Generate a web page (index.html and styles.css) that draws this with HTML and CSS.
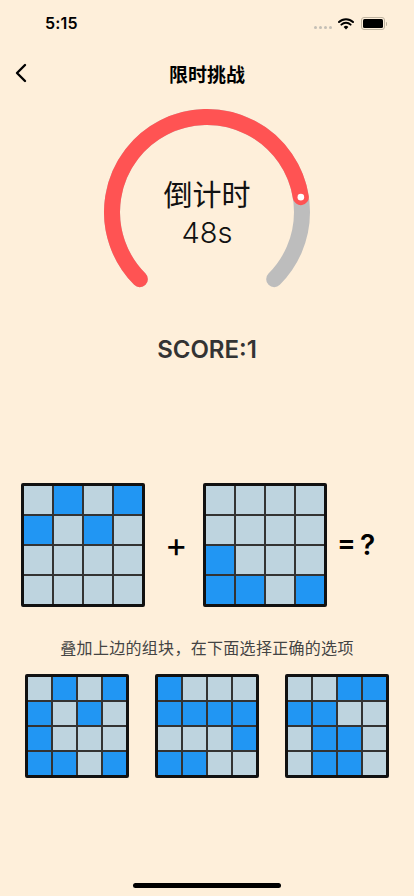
FILE: index.html
```html
<!DOCTYPE html>
<html>
<head>
    <meta charset="utf-8">
    <title>限时挑战</title>
    <link rel="stylesheet" href="styles.css">
</head>
<body>
    <div class="status-bar">
        <span class="time">5:15</span>
        <div class="status-icons">
            <div class="signal"><i></i><i></i><i></i><i></i></div>
            <svg class="wifi" width="16" height="12" viewBox="0 0 16 12">
                <path d="M8 11.5 L5.6 8.9 A3.4 3.4 0 0 1 10.4 8.9 Z" fill="#000"/>
                <path d="M3.4 6.6 A6.6 6.6 0 0 1 12.6 6.6" fill="none" stroke="#000" stroke-width="2" stroke-linecap="round"/>
                <path d="M1 4 A10 10 0 0 1 15 4" fill="none" stroke="#000" stroke-width="2" stroke-linecap="round"/>
            </svg>
            <div class="battery"><div class="battery-fill"></div></div>
            <div class="battery-nub"></div>
        </div>
    </div>

    <div class="nav-bar">
        <svg class="back" width="14" height="20" viewBox="0 0 14 20">
            <path d="M11 2 L3 10 L11 18" fill="none" stroke="#000" stroke-width="2.4" stroke-linecap="round" stroke-linejoin="round"/>
        </svg>
        <h1 class="title">限时挑战</h1>
    </div>

    <div class="gauge">
        <svg width="224" height="200" viewBox="0 0 224 200">
            <!-- remaining track -->
            <path d="M44.82 171.18 A95 95 0 1 1 179.18 171.18" fill="none" stroke="#bdbdbd" stroke-width="16" stroke-linecap="round"/>
            <!-- 48 of 60 seconds -->
            <path d="M44.82 171.18 A95 95 0 1 1 205.83 89.14" fill="none" stroke="#ff5353" stroke-width="16" stroke-linecap="round"/>
            <circle cx="205.83" cy="89.14" r="3.3" fill="#fff"/>
        </svg>
        <div class="gauge-text">
            <div class="gauge-label">倒计时</div>
            <div class="gauge-value">48s</div>
        </div>
    </div>

    <div class="score">SCORE:1</div>

    <div class="question">
        <div class="board big">
            <i></i><i class="on"></i><i></i><i class="on"></i>
            <i class="on"></i><i></i><i class="on"></i><i></i>
            <i></i><i></i><i></i><i></i>
            <i></i><i></i><i></i><i></i>
        </div>
        <span class="plus">+</span>
        <div class="board big">
            <i></i><i></i><i></i><i></i>
            <i></i><i></i><i></i><i></i>
            <i class="on"></i><i></i><i></i><i></i>
            <i class="on"></i><i class="on"></i><i></i><i class="on"></i>
        </div>
        <span class="equals">= ?</span>
    </div>

    <p class="hint">叠加上边的组块，在下面选择正确的选项</p>

    <div class="options">
        <div class="board small">
            <i></i><i class="on"></i><i></i><i class="on"></i>
            <i class="on"></i><i></i><i class="on"></i><i></i>
            <i class="on"></i><i></i><i></i><i></i>
            <i class="on"></i><i class="on"></i><i></i><i class="on"></i>
        </div>
        <div class="board small">
            <i class="on"></i><i></i><i></i><i></i>
            <i class="on"></i><i class="on"></i><i class="on"></i><i class="on"></i>
            <i></i><i></i><i></i><i class="on"></i>
            <i class="on"></i><i class="on"></i><i></i><i></i>
        </div>
        <div class="board small">
            <i></i><i></i><i class="on"></i><i class="on"></i>
            <i class="on"></i><i class="on"></i><i></i><i></i>
            <i></i><i class="on"></i><i class="on"></i><i></i>
            <i></i><i class="on"></i><i class="on"></i><i></i>
        </div>
    </div>

    <div class="home-indicator"></div>
</body>
</html>
```

FILE: styles.css
```css
body {
    margin: 0;
    width: 414px;
    height: 896px;
    background: #feefda;
    font-family: Inter, "Noto Sans CJK SC", sans-serif;
    color: #000;
    display: flex;
    flex-direction: column;
    overflow: hidden;
}

.status-bar {
    height: 47px;
    display: flex;
    align-items: center;
    justify-content: space-between;
    padding: 0 27px 0 45px;
}

.time {
    font-size: 16px;
    font-weight: 600;
    letter-spacing: 0.2px;
    margin-top: -1px;
}

.status-icons {
    display: flex;
    align-items: center;
}

.signal {
    display: flex;
    gap: 2px;
    margin: 8px 6px 0 0;
}

.signal i {
    width: 3px;
    height: 3px;
    border-radius: 50%;
    background: #c4bfb6;
}

.wifi {
    margin-right: 7px;
}

.battery {
    width: 20px;
    height: 9px;
    border: 1.5px solid #bfb3a0;
    border-radius: 3px;
    padding: 1px;
}

.battery-fill {
    width: 100%;
    height: 100%;
    background: #000;
    border-radius: 1.5px;
}

.battery-nub {
    width: 1.5px;
    height: 4px;
    background: #bfb3a0;
    border-radius: 0 1px 1px 0;
    margin-left: 1px;
}

.nav-bar {
    height: 52px;
    display: flex;
    align-items: center;
    justify-content: center;
    position: relative;
}

.back {
    position: absolute;
    left: 14px;
    top: 16px;
}

.title {
    margin: 0;
    font-size: 19px;
    font-weight: 700;
}

.gauge {
    position: relative;
    align-self: center;
    width: 224px;
    height: 200px;
    margin-top: 9px;
}

.gauge svg {
    display: block;
}

.gauge-text {
    position: absolute;
    left: 0;
    right: 0;
    top: 70px;
    text-align: center;
    color: #111;
}

.gauge-label {
    font-size: 29px;
    line-height: 36px;
}

.gauge-value {
    font-size: 29px;
    font-weight: 300;
    line-height: 38px;
}

.score {
    margin-top: 27px;
    text-align: center;
    font-size: 24px;
    font-weight: 600;
    line-height: 30px;
    color: #333;
}

.question {
    margin-top: 118px;
    display: flex;
    align-items: center;
    padding-left: 21px;
}

.board {
    display: grid;
    gap: 2px;
    background: #333;
    border: 3px solid #111;
    border-radius: 2px;
}

.board i {
    background: #bed4df;
}

.board i.on {
    background: #2196f3;
}

.board.big {
    grid-template-columns: repeat(4, 28px);
    grid-auto-rows: 28px;
}

.board.small {
    grid-template-columns: repeat(4, 23px);
    grid-auto-rows: 23px;
}

.plus {
    width: 18px;
    margin: 0 20px;
    font-size: 34px;
    font-weight: 400;
    line-height: 1;
    text-align: center;
}

.equals {
    margin-left: 10px;
    font-size: 28px;
    font-weight: 600;
    word-spacing: -3px;
}

.hint {
    margin: 31px 0 0;
    text-align: center;
    font-size: 16px;
    letter-spacing: 0.3px;
    line-height: 20px;
    color: #444;
}

.options {
    margin-top: 16px;
    display: flex;
    justify-content: center;
    gap: 26px;
}

.home-indicator {
    margin: auto auto 8px;
    width: 148px;
    height: 5px;
    border-radius: 3px;
    background: #000;
}
```
